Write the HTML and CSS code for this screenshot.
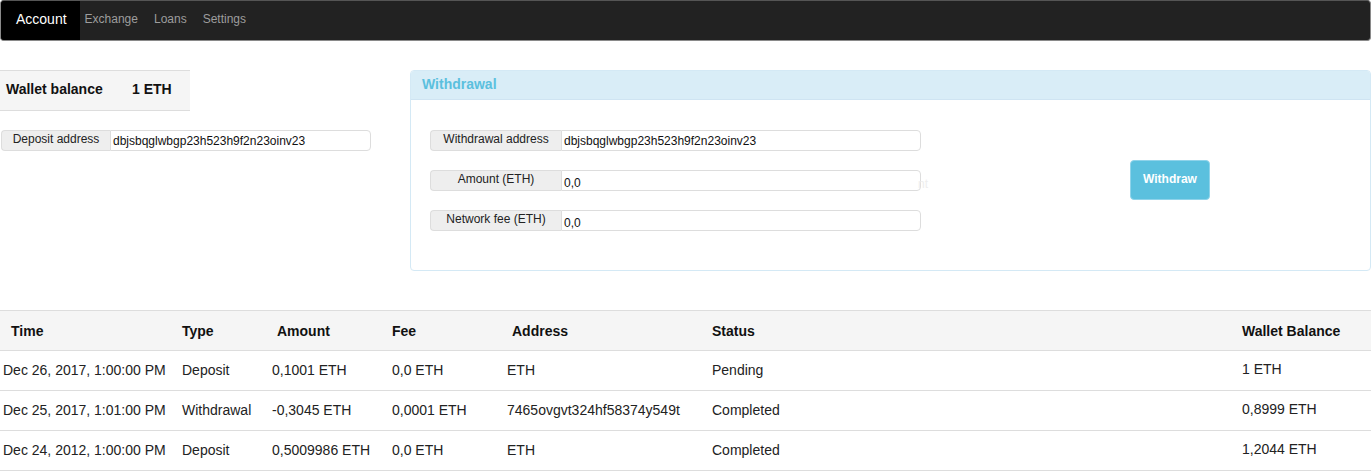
FILE: index.html
```html
<!DOCTYPE html>
<html>
<head>
<meta charset="utf-8">
<link rel="stylesheet" href="styles.css">
</head>
<body>
<nav class="navbar">
  <a class="nav-link active">Account</a>
  <a class="nav-link">Exchange</a>
  <a class="nav-link">Loans</a>
  <a class="nav-link">Settings</a>
</nav>

<div class="top">
  <div class="left">
    <div class="balance">
      <span class="balance-label">Wallet balance</span>
      <span class="balance-value">1 ETH</span>
    </div>
    <div class="group deposit">
      <span class="addon addon-deposit">Deposit address</span>
      <span class="field">dbjsbqglwbgp23h523h9f2n23oinv23</span>
    </div>
  </div>

  <div class="panel">
    <div class="panel-heading">Withdrawal</div>
    <div class="panel-body">
      <div class="form">
        <div class="group">
          <span class="addon addon-w">Withdrawal address</span>
          <span class="field">dbjsbqglwbgp23h523h9f2n23oinv23</span>
        </div>
        <div class="row-with-hint">
          <div class="group">
            <span class="addon addon-w">Amount (ETH)</span>
            <span class="field low">0,0</span>
          </div>
          <span class="hint">nt</span>
        </div>
        <div class="group">
          <span class="addon addon-w">Network fee (ETH)</span>
          <span class="field low">0,0</span>
        </div>
      </div>
      <button class="btn">Withdraw</button>
    </div>
  </div>
</div>

<table class="history">
  <colgroup>
    <col style="width:179px"><col style="width:90px"><col style="width:120px"><col style="width:115px"><col style="width:205px"><col style="width:530px"><col>
  </colgroup>
  <thead>
    <tr>
      <th class="wide">Time</th>
      <th>Type</th>
      <th class="mid">Amount</th>
      <th>Fee</th>
      <th class="mid">Address</th>
      <th>Status</th>
      <th>Wallet Balance</th>
    </tr>
  </thead>
  <tbody>
    <tr>
      <td>Dec 26, 2017, 1:00:00 PM</td><td>Deposit</td><td>0,1001 ETH</td><td>0,0 ETH</td><td>ETH</td><td>Pending</td><td class="bal">1 ETH</td>
    </tr>
    <tr>
      <td>Dec 25, 2017, 1:01:00 PM</td><td>Withdrawal</td><td>-0,3045 ETH</td><td>0,0001 ETH</td><td>7465ovgvt324hf58374y549t</td><td>Completed</td><td class="bal">0,8999 ETH</td>
    </tr>
    <tr>
      <td>Dec 24, 2012, 1:00:00 PM</td><td>Deposit</td><td>0,5009986 ETH</td><td>0,0 ETH</td><td>ETH</td><td>Completed</td><td class="bal">1,2044 ETH</td>
    </tr>
  </tbody>
</table>
</body>
</html>
```

FILE: styles.css
```css
* { box-sizing: border-box; }
body {
  margin: 0;
  font-family: "Liberation Sans", Arial, sans-serif;
  color: #333;
  background: #fff;
  width: 1371px;
}

.navbar {
  display: flex;
  align-items: stretch;
  height: 41px;
  background: #222;
  border: 1px solid #8a8a8a;
  border-top-color: #555;
  border-radius: 4px;
  overflow: hidden;
}
.nav-link {
  display: flex;
  align-items: center;
  padding: 0 8px 3px;
  font-size: 12px;
  color: #9d9d9d;
}
.nav-link.active {
  background: #000;
  color: #fff;
  font-size: 14px;
  padding: 0 13px 3px 15px;
  margin-right: -3px;
}

.top {
  display: flex;
  align-items: flex-start;
  margin-top: 29px;
}
.left {
  width: 371px;
  margin-right: 39px;
}
.balance {
  display: flex;
  align-items: center;
  width: 190px;
  height: 41px;
  background: #f5f5f5;
  border-top: 1px solid #ddd;
  border-bottom: 1px solid #ddd;
  font-weight: bold;
  font-size: 14px;
  color: #111;
  padding: 0 0 3px 6px;
}
.balance-label { width: 126px; }

.group {
  display: flex;
  height: 21px;
  width: 491px;
}
.deposit {
  width: 370px;
  margin-left: 1px;
  margin-top: 19px;
}
.addon {
  display: flex;
  justify-content: center;
  align-items: center;
  padding-bottom: 4px;
  background: #eee;
  border: 1px solid #ddd;
  border-right: 0;
  border-radius: 4px 0 0 4px;
  font-size: 12px;
  color: #222;
}
.addon-deposit { width: 109px; }
.addon-w { width: 131px; }
.field {
  flex: 1;
  display: flex;
  align-items: center;
  padding: 1px 2px 0;
  border: 1px solid #ddd;
  border-radius: 0 4px 4px 0;
  font-size: 12px;
  color: #111;
  background: #fff;
}
.field.low { padding-top: 4px; }

.panel {
  width: 961px;
  height: 201px;
  border: 1px solid #d4e9f5;
  border-radius: 4px;
  overflow: hidden;
}
.panel-heading {
  height: 29px;
  background: #d9edf7;
  border-bottom: 1px solid #cfe4f2;
  color: #5bc0de;
  font-weight: bold;
  font-size: 14px;
  display: flex;
  align-items: center;
  padding-left: 11px;
  padding-bottom: 2px;
}
.panel-body {
  display: flex;
  align-items: flex-start;
  padding: 30px 19px;
}
.form {
  display: flex;
  flex-direction: column;
  gap: 19px;
}
.row-with-hint {
  display: flex;
  align-items: center;
}
.hint {
  font-size: 12px;
  color: #eee;
  margin-left: -3px;
  padding-top: 6px;
  width: 0;
  white-space: nowrap;
}
.btn {
  margin-left: 209px;
  margin-top: 30px;
  width: 80px;
  height: 40px;
  background: #5bc0de;
  border: 1px solid #8fd3ea;
  border-radius: 4px;
  color: #fff;
  font-family: "Liberation Sans", Arial, sans-serif;
  font-weight: bold;
  font-size: 12px;
  padding: 0 0 3px 0;
}

.history {
  margin-top: 39px;
  width: 1371px;
  border-collapse: collapse;
  table-layout: fixed;
  font-size: 14px;
}
.history th {
  height: 40px;
  background: #f5f5f5;
  border-top: 1px solid #ddd;
  border-bottom: 1px solid #ddd;
  text-align: left;
  padding: 0 0 0 3px;
  color: #111;
}
.history th.wide { padding-left: 11px; }
.history th.mid { padding-left: 8px; }
.history td {
  height: 40px;
  border-bottom: 1px solid #ddd;
  padding: 0 0 1px 3px;
  color: #222;
  white-space: nowrap;
}
.history td.bal { padding-bottom: 4px; }
```
